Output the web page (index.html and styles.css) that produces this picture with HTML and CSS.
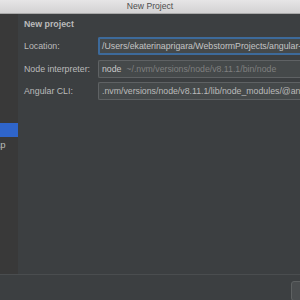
FILE: index.html
```html
<!DOCTYPE html>
<html>
<head>
<meta charset="utf-8">
<link rel="stylesheet" href="styles.css">
</head>
<body>
<div class="window">
  <div class="titlebar">New Project</div>
  <div class="body">
    <div class="sidebar">
      <div class="item"></div>
      <div class="item"></div>
      <div class="item"></div>
      <div class="item"></div>
      <div class="item"></div>
      <div class="item"></div>
      <div class="item"></div>
      <div class="item selected"></div>
      <div class="item"><span class="cut">Ap</span></div>
    </div>
    <div class="main">
      <div class="heading">New project</div>
      <div class="form">
        <div class="label">Location:</div>
        <div class="field focused">/Users/ekaterinaprigara/WebstormProjects/angular-project</div>
        <div class="label">Node interpreter:</div>
        <div class="field"><span class="bright">node</span>&nbsp; <span class="dim">~/.nvm/versions/node/v8.11.1/bin/node</span></div>
        <div class="label">Angular CLI:</div>
        <div class="field">.nvm/versions/node/v8.11.1/lib/node_modules/@angular/cli</div>
      </div>
    </div>
  </div>
  <div class="footer">
    <div class="button"></div>
  </div>
</div>
</body>
</html>
```

FILE: styles.css
```css
html, body {
  margin: 0;
  padding: 0;
  width: 300px;
  height: 300px;
  overflow: hidden;
  background: #3c3f41;
}
.window {
  display: flex;
  flex-direction: column;
  width: 300px;
  height: 300px;
  font-family: "Liberation Sans", Arial, sans-serif;
}
.titlebar {
  height: 13px;
  flex: none;
  background: linear-gradient(#e6e5e6, #d3d2d3);
  border-bottom: 1px solid #a9a9a9;
  color: #4d4d4d;
  font-size: 8.6px;
  line-height: 13px;
  text-align: center;
}
.body {
  display: flex;
  height: 260px;
  flex: none;
  border-bottom: 1px solid #4a4d4f;
}
.sidebar {
  width: 18px;
  flex: none;
  background: #393939;
  overflow: hidden;
  padding-top: 4px;
}
.item {
  height: 15px;
  line-height: 15px;
  font-size: 9px;
  color: #bbbbbb;
  white-space: nowrap;
}
.item.selected {
  background: #2f65ca;
  height: 14px;
}
.cut {
  display: inline-block;
  margin-left: -6px;
  font-size: 9.5px;
}
.main {
  flex: 1;
  overflow: hidden;
  padding: 4px 0 0 6px;
}
.heading {
  font-size: 8.8px;
  font-weight: bold;
  color: #bbbbbb;
  height: 12px;
  line-height: 12px;
  margin-bottom: 7px;
}
.form {
  display: grid;
  grid-template-columns: 74px 1fr;
  row-gap: 4.5px;
  align-items: center;
}
.label {
  font-size: 8.8px;
  color: #bbbbbb;
  white-space: nowrap;
}
.field {
  box-sizing: border-box;
  height: 18px;
  padding: 0 3px;
  border: 1px solid #5f6264;
  border-right: none;
  border-radius: 2px 0 0 2px;
  background: #45494a;
  color: #bbbbbb;
  font-size: 8.75px;
  white-space: nowrap;
  overflow: hidden;
  line-height: 16px;
}
.field.focused {
  border: 2px solid #3d6a9a;
  border-right: none;
  line-height: 14px;
  padding-left: 2px;
  color: #c4c4c4;
}
.bright { color: #c8c8c8; }
.dim { color: #7f7f7f; }
.footer {
  flex: 1;
  position: relative;
}
.button {
  position: absolute;
  left: 291px;
  top: 6px;
  width: 20px;
  height: 20px;
  box-sizing: border-box;
  border: 1px solid #5e6162;
  border-radius: 3px;
  background: #4a4d4f;
}
```
